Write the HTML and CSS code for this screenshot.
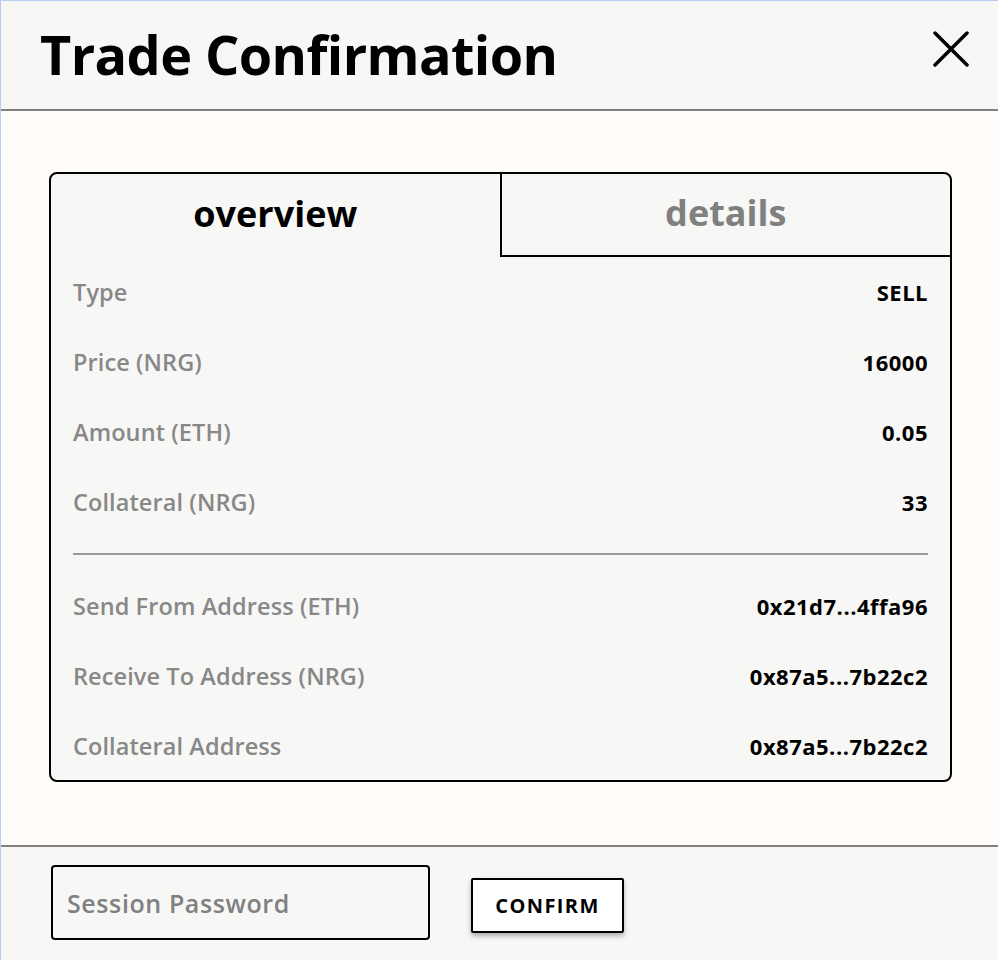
FILE: index.html
```html
<!DOCTYPE html>
<html>
<head>
<meta charset="utf-8">
<link rel="stylesheet" href="styles.css">
</head>
<body>
<div class="modal">
  <header class="head">
    <h1 class="title">Trade Confirmation</h1>
    <button class="close" aria-label="close">
      <svg width="36" height="36" viewBox="0 0 36 36"><path d="M2 2 L34 34 M34 2 L2 34" stroke="#000" stroke-width="3.5" stroke-linecap="round"/></svg>
    </button>
  </header>
  <main class="body">
    <section class="card">
      <div class="tabs">
        <div class="tab active">overview</div>
        <div class="tab">details</div>
      </div>
      <div class="rows">
        <div class="row"><span class="label">Type</span><span class="value">SELL</span></div>
        <div class="row"><span class="label">Price (NRG)</span><span class="value">16000</span></div>
        <div class="row"><span class="label">Amount (ETH)</span><span class="value">0.05</span></div>
        <div class="row"><span class="label">Collateral (NRG)</span><span class="value">33</span></div>
        <hr class="divider">
        <div class="row"><span class="label">Send From Address (ETH)</span><span class="value">0x21d7...4ffa96</span></div>
        <div class="row"><span class="label">Receive To Address (NRG)</span><span class="value">0x87a5...7b22c2</span></div>
        <div class="row"><span class="label">Collateral Address</span><span class="value">0x87a5...7b22c2</span></div>
      </div>
    </section>
  </main>
  <footer class="foot">
    <input class="pw" type="password" placeholder="Session Password">
    <button class="confirm">CONFIRM</button>
  </footer>
</div>
</body>
</html>
```
FILE: styles.css
```css
html, body { margin: 0; padding: 0; }
body {
  width: 998px;
  height: 960px;
  background: #fffcfa;
  font-family: "Open Sans", "Noto Sans", sans-serif;
  overflow: hidden;
}
.modal {
  height: 960px;
  display: flex;
  flex-direction: column;
  border-left: 1px solid #b9cdf0;
  border-top: 1px solid #b9cdf0;
  box-sizing: border-box;
}
.head {
  height: 108px;
  background: #f7f7f5;
  border-bottom: 2px solid #808080;
  display: flex;
  align-items: center;
  justify-content: space-between;
  padding: 0 29px 0 39px;
  flex: none;
}
.title {
  margin: 0;
  font-size: 54px;
  font-weight: 700;
  letter-spacing: -0.6px;
  color: #000;
  padding-bottom: 2px;
}
.close {
  border: none;
  background: none;
  padding: 0;
  margin-top: -12px;
  display: flex;
}
.body {
  flex: 1;
  padding: 61px 46px 0 48px;
}
.card {
  height: 610px;
  box-sizing: border-box;
  border: 2px solid #000;
  border-radius: 8px;
  background: #f7f7f5;
  overflow: hidden;
}
.tabs {
  display: flex;
  height: 83px;
}
.tab {
  flex: 1;
  display: flex;
  align-items: center;
  justify-content: center;
  font-size: 36px;
  font-weight: 700;
  color: #808080;
  padding-bottom: 4px;
  box-sizing: border-box;
}
.tab.active { color: #000; }
.tab + .tab {
  border-left: 2px solid #000;
  border-bottom: 2px solid #000;
}
.rows {
  padding: 0 22px;
}
.row {
  height: 70px;
  display: flex;
  align-items: center;
  justify-content: space-between;
}
.label {
  font-size: 23.5px;
  font-weight: 600;
  letter-spacing: 0.1px;
  color: #888;
}
.value {
  font-size: 22px;
  font-weight: 700;
  letter-spacing: 0.5px;
  color: #000;
}
.divider {
  border: none;
  border-top: 2px solid #999;
  margin: 16px 0 16px;
}
.foot {
  height: 113px;
  flex: none;
  background: #f7f7f5;
  border-top: 2px solid #808080;
  display: flex;
  align-items: center;
  padding: 0 0 0 50px;
  gap: 41px;
}
.pw {
  width: 379px;
  height: 75px;
  margin-bottom: 2px;
  box-sizing: border-box;
  border: 2px solid #000;
  border-radius: 4px;
  background: #f7f7f5;
  padding: 0 14px;
  font-family: inherit;
  font-size: 25px;
  font-weight: 600;
  letter-spacing: 0.6px;
  outline: none;
}
.pw::placeholder { color: #808080; }
.confirm {
  width: 153px;
  height: 55px;
  margin-top: 4px;
  border: 2px solid #000;
  border-radius: 2px;
  background: #fff;
  box-shadow: 0 3px 5px rgba(0,0,0,0.3);
  font-family: inherit;
  font-size: 20px;
  font-weight: 700;
  letter-spacing: 1.4px;
  color: #000;
}
```
